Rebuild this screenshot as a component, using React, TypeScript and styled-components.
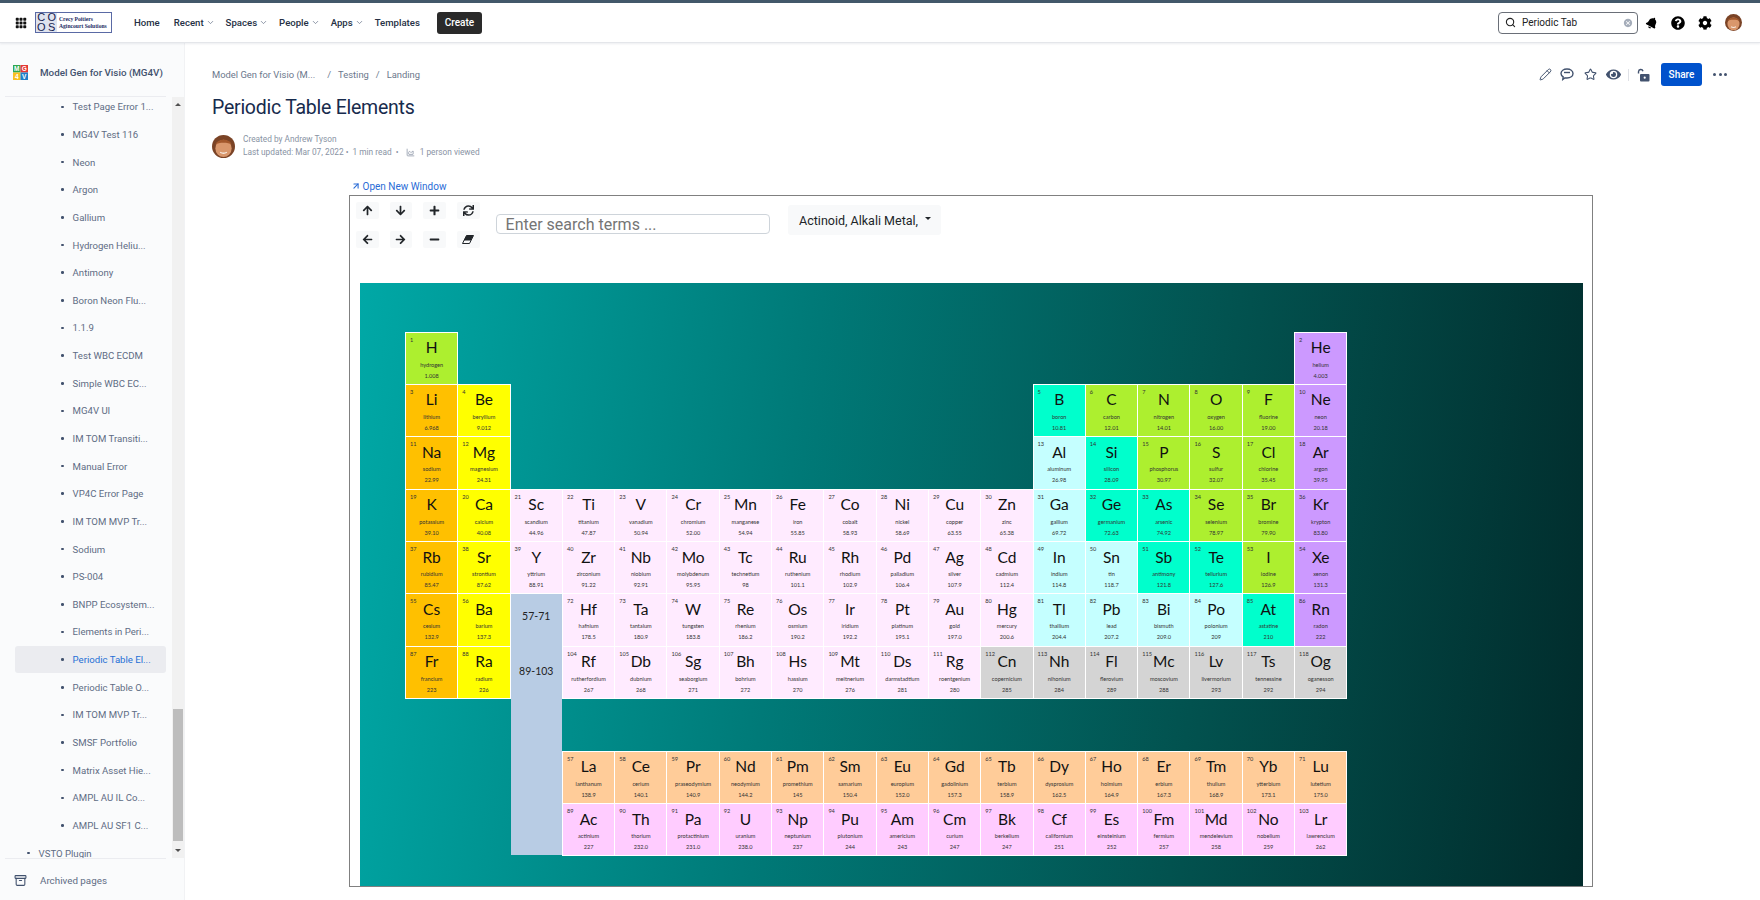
import React from 'react';
import styled, { createGlobalStyle } from 'styled-components';
import { Archive, ArrowUpRight, ChartArea, ChevronDown, Pencil, Search, Star } from 'lucide-react';
import { BsGrid3X3GapFill } from 'react-icons/bs';
import { FaArrowDown, FaArrowLeft, FaArrowRight, FaArrowUp, FaBell, FaCog, FaEye, FaMinus, FaPlus, FaQuestionCircle, FaSync } from 'react-icons/fa';
import { MdCancel } from 'react-icons/md';

const UI_FONT = `Roboto, "Open Sans", sans-serif`;
const TABLE_FONT = `Lato, "Open Sans", sans-serif`;

const GlobalStyle = createGlobalStyle`
  html, body { margin: 0; padding: 0; background: #fff; }
  body { font-family: ${UI_FONT}; color: #172b4d; }
  * { box-sizing: border-box; }
`;

//Page shell
const Page = styled.div`
  width: 1760px;
  height: 900px;
  display: flex;
  flex-direction: column;
  overflow: hidden;
  border-top: 3px solid #42586a;
`;

const TopBar = styled.header`
  height: 40px;
  flex: none;
  display: flex;
  align-items: center;
  padding: 0 18px 0 15px;
  background: #fff;
  border-bottom: 1px solid #e4e6ea;
  box-shadow: 0 1px 2px rgba(9, 30, 66, 0.08);
  z-index: 1;
`;

const AppsIcon = styled(BsGrid3X3GapFill)`
  width: 12px;
  height: 12px;
  color: #111;
  flex: none;
`;

const LogoBox = styled.div`
  margin-left: 8px;
  width: 77px;
  height: 21px;
  display: flex;
  align-items: center;
  border: 1px solid #5a6aa5;
  background: #fff;
  flex: none;
`;

const LogoMark = styled.div`
  width: 21px;
  height: 19px;
  display: grid;
  grid-template-columns: 1fr 1fr;
  grid-template-rows: 1fr 1fr;
  background: #dfe3ee;
  font: 400 11px/9.5px "Liberation Sans", sans-serif;
  color: #16224f;
  text-align: center;
`;

const LogoText = styled.div`
  margin-left: 2px;
  font: 700 5.6px/7px "Liberation Serif", serif;
  color: #1b2a63;
  white-space: nowrap;
`;

const Nav = styled.nav`
  margin-left: 22px;
  display: flex;
  align-items: center;
  gap: 11px;
`;

const NavItem = styled.span<{ $after?: number }>`
  display: inline-flex;
  align-items: center;
  gap: 2px;
  margin-right: ${(p) => p.$after ?? 0}px;
  font-size: 9.6px;
  font-weight: 500;
  color: #253044;
  white-space: nowrap;
`;

const CreateButton = styled.button`
  margin-left: 6px;
  width: 45px;
  height: 22px;
  border: 0;
  border-radius: 3px;
  background: #2a2a2a;
  color: #fff;
  font: 500 10px ${UI_FONT};
  padding: 0;
`;

const TopRight = styled.div`
  margin-left: auto;
  display: flex;
  align-items: center;
`;

const SearchBox = styled.div`
  width: 140px;
  height: 22px;
  display: flex;
  align-items: center;
  padding: 0 4px 0 6px;
  border: 1.5px solid #6a6f78;
  border-radius: 4px;
  color: #222;
  font-size: 10px;
  gap: 6px;
`;

const SearchValue = styled.span`
  flex: 1;
`;

const TopIcons = styled.div`
  margin-left: 8px;
  display: flex;
  align-items: center;
  gap: 13px;
  color: #000;
`;

const TiltedBell = styled(FaBell)`
  transform: rotate(28deg);
`;

const AvatarSvg = styled.svg<{ $size: number }>`
  width: ${(p) => p.$size}px;
  height: ${(p) => p.$size}px;
  flex: none;
  display: block;
`;

const Body = styled.div`
  flex: 1;
  min-height: 0;
  display: flex;
`;

//Sidebar
const Sidebar = styled.aside`
  width: 185px;
  flex: none;
  display: flex;
  flex-direction: column;
  background: #fafbfc;
  border-right: 1px solid #f1f2f4;
`;

const SpaceHeader = styled.div`
  height: 54px;
  flex: none;
  display: flex;
  align-items: center;
  gap: 12px;
  margin: 0 18px 0 5px;
  padding: 5px 0 0 8px;
  border-bottom: 1px solid #ebecf0;
`;

const SpaceLogoSvg = styled.svg`
  width: 15px;
  height: 15px;
  flex: none;
`;

const SpaceTitle = styled.span`
  font-size: 9.8px;
  font-weight: 500;
  color: #42526e;
  white-space: nowrap;
`;

const TreeArea = styled.div`
  flex: 1;
  min-height: 0;
  display: flex;
`;

const TreeClip = styled.div`
  flex: 1;
  min-width: 0;
  overflow: hidden;
`;

const TreeList = styled.ul`
  list-style: none;
  margin: -4px 0 0;
  padding: 0 6px 0 15px;
`;

const TreeItem = styled.li<{ $active?: boolean; $top?: boolean }>`
  height: 27.65px;
  display: flex;
  align-items: center;
  gap: 9px;
  padding-left: ${(p) => (p.$top ? '10px' : '46px')};
  margin-left: ${(p) => (p.$top ? '2px' : '0')};
  border-radius: 3px;
  font-size: 9.6px;
  white-space: nowrap;
  color: ${(p) => (p.$active ? '#1f6fd6' : '#5e6c84')};
  background: ${(p) => (p.$active ? '#ebecf0' : 'transparent')};
`;

const Bullet = styled.span`
  width: 2.6px;
  height: 2.6px;
  border-radius: 50%;
  background: #42526e;
  flex: none;
`;

const ScrollTrack = styled.div`
  width: 12px;
  flex: none;
  display: flex;
  flex-direction: column;
  align-items: center;
  background: #f1f1f1;
`;

const ScrollArrow = styled.span<{ $down?: boolean }>`
  width: 0;
  height: 0;
  flex: none;
  margin: ${(p) => (p.$down ? '8px 0 6px' : '6px 0')};
  border-left: 3px solid transparent;
  border-right: 3px solid transparent;
  ${(p) => (p.$down ? 'border-top: 3px solid #505050;' : 'border-bottom: 3px solid #505050;')}
`;

const ScrollSpace = styled.div`
  flex: 1;
`;

const ScrollThumb = styled.div`
  width: 10px;
  height: 132px;
  flex: none;
  background: #bdbdbd;
`;

const SidebarFoot = styled.div`
  height: 42px;
  flex: none;
  display: flex;
  align-items: center;
  gap: 13px;
  margin: 0 18px 0 5px;
  padding: 2px 0 0 9px;
  font-size: 9.8px;
  color: #5e6c84;
  border-top: 1px solid #ebecf0;
`;

//Main column
const Main = styled.main`
  flex: 1;
  min-width: 0;
  padding: 20px 33px 0 27px;
`;

const CrumbRow = styled.div`
  height: 23px;
  display: flex;
  align-items: center;
  justify-content: space-between;
`;

const Crumbs = styled.div`
  display: flex;
  align-items: center;
  gap: 7px;
  font-size: 9.4px;
  color: #6b778c;
`;

const CrumbFirst = styled.span`
  margin-right: 5px;
`;

const Actions = styled.div`
  display: flex;
  align-items: center;
  color: #42526e;
`;

const ActionSlot = styled.span<{ $w: number }>`
  width: ${(p) => p.$w}px;
  display: inline-flex;
  justify-content: flex-start;
  align-items: center;
`;

const Divider = styled.span`
  width: 1px;
  height: 12px;
  background: #dfe1e6;
  margin-right: 8px;
`;

const ShareButton = styled.button`
  width: 41px;
  height: 23px;
  border: 0;
  border-radius: 3px;
  background: #0052cc;
  color: #fff;
  font: 500 10px ${UI_FONT};
  padding: 0;
  margin: 0 11px 0 3px;
`;

const MoreDots = styled.span`
  display: inline-flex;
  gap: 2.5px;
`;

const MoreDot = styled.span`
  width: 3px;
  height: 3px;
  border-radius: 50%;
  background: #42526e;
`;

const Title = styled.h1`
  margin: 7px 0 0;
  font-size: 19.5px;
  line-height: 30px;
  letter-spacing: -0.25px;
  font-weight: 400;
  color: #172b4d;
`;

const Byline = styled.div`
  margin-top: 10px;
  display: flex;
  align-items: center;
  gap: 8px;
`;

const BylineText = styled.div`
  font-size: 8.3px;
  line-height: 13px;
  color: #8993a4;
`;

const BylineRow = styled.div`
  display: flex;
  align-items: center;
  gap: 3px;
  white-space: pre;
`;

const Embedded = styled.div`
  margin: 20px 0 0 136.5px;
  width: 1244.5px;
`;

const OpenLink = styled.a`
  height: 14px;
  display: flex;
  align-items: center;
  gap: 2px;
  padding-left: 2px;
  font-size: 10px;
  color: #2a6cd6;
`;

const Frame = styled.div`
  margin-top: 2px;
  height: 692px;
  border: 1px solid #808080;
  padding: 6px 9px 0 6.5px;
`;

const Toolbar = styled.div`
  height: 46px;
  display: flex;
  align-items: flex-start;
`;

const IconGrid = styled.div`
  display: grid;
  grid-template-columns: repeat(4, 22.5px);
  grid-template-rows: repeat(2, 17px);
  column-gap: 11.2px;
  row-gap: 12px;
  flex: none;
`;

const ToolButton = styled.button`
  border: 0;
  padding: 0;
  border-radius: 2px;
  background: #f8f9fa;
  color: #212529;
  display: flex;
  align-items: center;
  justify-content: center;
  font-size: 11px;
`;

const SearchInput = styled.input`
  margin: 12px 0 0 16px;
  width: 274px;
  height: 20px;
  padding: 0 9px;
  border: 1px solid #ced4da;
  border-radius: 4px;
  font: 400 16px ${UI_FONT};
  background: #fff;
  &::placeholder { color: #757575; opacity: 1; }
`;

const FilterButton = styled.button`
  margin: 3px 0 0 18px;
  width: 153px;
  height: 30px;
  border: 0;
  border-radius: 3px;
  background: #f8f9fa;
  color: #212529;
  display: flex;
  align-items: center;
  justify-content: center;
  gap: 7px;
  font: 400 12.5px ${UI_FONT};
  padding: 0 0 0 2px;
  white-space: nowrap;
`;

const Caret = styled.span`
  width: 0;
  height: 0;
  margin-bottom: 3px;
  border-left: 3.5px solid transparent;
  border-right: 3.5px solid transparent;
  border-top: 3.5px solid #212529;
`;

//Periodic table
const Board = styled.div`
  margin: 35px 0 0 3.5px;
  height: 603px;
  padding: 49px 0 0 46px;
  background: linear-gradient(97deg, #00a8a6 0%, #007a78 35%, #02524f 68%, #012b2b 100%);
`;

const TableGrid = styled.div`
  display: grid;
  grid-template-columns: repeat(18, 52.3px);
  grid-template-rows: repeat(10, 52.4px);
`;

const CATEGORY: Record<string, string> = {
  nonmetal: '#adef2f',
  alkali: '#ffc000',
  alkaline: '#ffff00',
  transition: '#ffebff',
  post: '#c5ffff',
  metalloid: '#00ffcc',
  noble: '#cc99ff',
  lanthanide: '#ffcc99',
  actinide: '#ffccff',
  unknown: '#d4d4d4',
};

const Cell = styled.div<{ $col: number; $row: number; $cat: string }>`
  grid-column: ${(p) => p.$col};
  grid-row: ${(p) => p.$row};
  margin: 0.5px;
  position: relative;
  display: flex;
  flex-direction: column;
  align-items: center;
  padding-top: 4.5px;
  background: ${(p) => CATEGORY[p.$cat]};
  box-shadow: 0 0 0 1px #fff;
  font-family: ${TABLE_FONT};
  color: #111;
`;

const CellNumber = styled.span`
  position: absolute;
  left: 4px;
  top: 3px;
  font-size: 5.6px;
  line-height: 7px;
  color: #333;
`;

const Symbol = styled.span`
  font-size: 15.5px;
  line-height: 21px;
`;

const ElementName = styled.span`
  margin-top: 2.5px;
  font-size: 5.6px;
  line-height: 8px;
  color: #333;
  white-space: nowrap;
`;

const Weight = styled.span`
  margin-top: 3px;
  font-size: 5.6px;
  line-height: 8px;
  color: #333;
`;

const SeriesColumn = styled.div`
  grid-column: 3;
  grid-row: 6 / 11;
  margin: 0.5px;
  display: flex;
  flex-direction: column;
  align-items: center;
  gap: 41px;
  padding-top: 15px;
  background: #b8cce4;
  font: 400 10.5px/14px ${TABLE_FONT};
  color: #222;
`;

type Entry = [string, string, string, string];

const alk = 'alkali', ae = 'alkaline', tm = 'transition', pt = 'post', md = 'metalloid', nm = 'nonmetal', ng = 'noble', un = 'unknown';

//[period row, start column, start number, entries]
const BLOCKS: [number, number, number, Entry[]][] = [
  [1, 1, 1, [['H', 'hydrogen', '1.008', nm]]],
  [1, 18, 2, [['He', 'helium', '4.003', ng]]],
  [2, 1, 3, [['Li', 'lithium', '6.968', alk], ['Be', 'beryllium', '9.012', ae]]],
  [2, 13, 5, [['B', 'boron', '10.81', md], ['C', 'carbon', '12.01', nm], ['N', 'nitrogen', '14.01', nm], ['O', 'oxygen', '16.00', nm], ['F', 'fluorine', '19.00', nm], ['Ne', 'neon', '20.18', ng]]],
  [3, 1, 11, [['Na', 'sodium', '22.99', alk], ['Mg', 'magnesium', '24.31', ae]]],
  [3, 13, 13, [['Al', 'aluminum', '26.98', pt], ['Si', 'silicon', '28.09', md], ['P', 'phosphorus', '30.97', nm], ['S', 'sulfur', '32.07', nm], ['Cl', 'chlorine', '35.45', nm], ['Ar', 'argon', '39.95', ng]]],
  [4, 1, 19, [['K', 'potassium', '39.10', alk], ['Ca', 'calcium', '40.08', ae], ['Sc', 'scandium', '44.96', tm], ['Ti', 'titanium', '47.87', tm], ['V', 'vanadium', '50.94', tm], ['Cr', 'chromium', '52.00', tm], ['Mn', 'manganese', '54.94', tm], ['Fe', 'iron', '55.85', tm], ['Co', 'cobalt', '58.93', tm], ['Ni', 'nickel', '58.69', tm], ['Cu', 'copper', '63.55', tm], ['Zn', 'zinc', '65.38', tm], ['Ga', 'gallium', '69.72', pt], ['Ge', 'germanium', '72.63', md], ['As', 'arsenic', '74.92', md], ['Se', 'selenium', '78.97', nm], ['Br', 'bromine', '79.90', nm], ['Kr', 'krypton', '83.80', ng]]],
  [5, 1, 37, [['Rb', 'rubidium', '85.47', alk], ['Sr', 'strontium', '87.62', ae], ['Y', 'yttrium', '88.91', tm], ['Zr', 'zirconium', '91.22', tm], ['Nb', 'niobium', '92.91', tm], ['Mo', 'molybdenum', '95.95', tm], ['Tc', 'technetium', '98', tm], ['Ru', 'ruthenium', '101.1', tm], ['Rh', 'rhodium', '102.9', tm], ['Pd', 'palladium', '106.4', tm], ['Ag', 'silver', '107.9', tm], ['Cd', 'cadmium', '112.4', tm], ['In', 'indium', '114.8', pt], ['Sn', 'tin', '118.7', pt], ['Sb', 'antimony', '121.8', md], ['Te', 'tellurium', '127.6', md], ['I', 'iodine', '126.9', nm], ['Xe', 'xenon', '131.3', ng]]],
  [6, 1, 55, [['Cs', 'cesium', '132.9', alk], ['Ba', 'barium', '137.3', ae]]],
  [6, 4, 72, [['Hf', 'hafnium', '178.5', tm], ['Ta', 'tantalum', '180.9', tm], ['W', 'tungsten', '183.8', tm], ['Re', 'rhenium', '186.2', tm], ['Os', 'osmium', '190.2', tm], ['Ir', 'iridium', '192.2', tm], ['Pt', 'platinum', '195.1', tm], ['Au', 'gold', '197.0', tm], ['Hg', 'mercury', '200.6', tm], ['Tl', 'thallium', '204.4', pt], ['Pb', 'lead', '207.2', pt], ['Bi', 'bismuth', '209.0', pt], ['Po', 'polonium', '209', pt], ['At', 'astatine', '210', md], ['Rn', 'radon', '222', ng]]],
  [7, 1, 87, [['Fr', 'francium', '223', alk], ['Ra', 'radium', '226', ae]]],
  [7, 4, 104, [['Rf', 'rutherfordium', '267', tm], ['Db', 'dubnium', '268', tm], ['Sg', 'seaborgium', '271', tm], ['Bh', 'bohrium', '272', tm], ['Hs', 'hassium', '270', tm], ['Mt', 'meitnerium', '276', tm], ['Ds', 'darmstadtium', '281', tm], ['Rg', 'roentgenium', '280', tm], ['Cn', 'copernicium', '285', un], ['Nh', 'nihonium', '284', un], ['Fl', 'flerovium', '289', un], ['Mc', 'moscovium', '288', un], ['Lv', 'livermorium', '293', un], ['Ts', 'tennessine', '292', un], ['Og', 'oganesson', '294', un]]],
  [9, 4, 57, [['La', 'lanthanum', '138.9', 'lanthanide'], ['Ce', 'cerium', '140.1', 'lanthanide'], ['Pr', 'praseodymium', '140.9', 'lanthanide'], ['Nd', 'neodymium', '144.2', 'lanthanide'], ['Pm', 'promethium', '145', 'lanthanide'], ['Sm', 'samarium', '150.4', 'lanthanide'], ['Eu', 'europium', '152.0', 'lanthanide'], ['Gd', 'gadolinium', '157.3', 'lanthanide'], ['Tb', 'terbium', '158.9', 'lanthanide'], ['Dy', 'dysprosium', '162.5', 'lanthanide'], ['Ho', 'holmium', '164.9', 'lanthanide'], ['Er', 'erbium', '167.3', 'lanthanide'], ['Tm', 'thulium', '168.9', 'lanthanide'], ['Yb', 'ytterbium', '173.1', 'lanthanide'], ['Lu', 'lutetium', '175.0', 'lanthanide']]],
  [10, 4, 89, [['Ac', 'actinium', '227', 'actinide'], ['Th', 'thorium', '232.0', 'actinide'], ['Pa', 'protactinium', '231.0', 'actinide'], ['U', 'uranium', '238.0', 'actinide'], ['Np', 'neptunium', '237', 'actinide'], ['Pu', 'plutonium', '244', 'actinide'], ['Am', 'americium', '243', 'actinide'], ['Cm', 'curium', '247', 'actinide'], ['Bk', 'berkelium', '247', 'actinide'], ['Cf', 'californium', '251', 'actinide'], ['Es', 'einsteinium', '252', 'actinide'], ['Fm', 'fermium', '257', 'actinide'], ['Md', 'mendelevium', '258', 'actinide'], ['No', 'nobelium', '259', 'actinide'], ['Lr', 'lawrencium', '262', 'actinide']]],
];

const TREE = [
  'Test Page Error 1...', 'MG4V Test 116', 'Neon', 'Argon', 'Gallium', 'Hydrogen Heliu...', 'Antimony', 'Boron Neon Flu...', '1.1.9',
  'Test WBC ECDM', 'Simple WBC EC...', 'MG4V UI', 'IM TOM Transiti...', 'Manual Error', 'VP4C Error Page', 'IM TOM MVP Tr...', 'Sodium',
  'PS-004', 'BNPP Ecosystem...', 'Elements in Peri...', 'Periodic Table El...', 'Periodic Table O...', 'IM TOM MVP Tr...', 'SMSF Portfolio',
  'Matrix Asset Hie...', 'AMPL AU IL Co...', 'AMPL AU SF1 C...',
];

//Small drawings
const Avatar = ({ size }: { size: number }) => (
  <AvatarSvg $size={size} viewBox="0 0 24 24">
    <circle cx="12" cy="12" r="12" fill="#7a4326" />
    <ellipse cx="12" cy="14" rx="8.5" ry="9" fill="#d9976c" />
    <path d="M3.5 10c2-6.5 15-7 17 0-3.5-2.5-13.5-2.5-17 0z" fill="#a3582c" />
    <path d="M8.5 18c2.2 1.3 4.8 1.3 7 0" stroke="#f6e9df" strokeWidth="1.5" fill="none" />
  </AvatarSvg>
);

const SpaceLogo = () => (
  <SpaceLogoSvg viewBox="0 0 15 15">
    <rect x="0" y="0" width="7.5" height="7.5" fill="#2fa84f" />
    <rect x="7.5" y="0" width="7.5" height="7.5" fill="#e53935" />
    <rect x="0" y="7.5" width="7.5" height="7.5" fill="#f9c01e" />
    <rect x="7.5" y="7.5" width="7.5" height="7.5" fill="#1e7fc9" />
    <text x="3.7" y="6.4" textAnchor="middle" fontSize="6.5" fontWeight="700" fontFamily="Liberation Sans" fill="#fff">M</text>
    <text x="11.2" y="6.4" textAnchor="middle" fontSize="6.5" fontWeight="700" fontFamily="Liberation Sans" fill="#fff">G</text>
    <text x="3.7" y="13.9" textAnchor="middle" fontSize="6.5" fontWeight="700" fontFamily="Liberation Sans" fill="#fff">4</text>
    <text x="11.2" y="13.9" textAnchor="middle" fontSize="6.5" fontWeight="700" fontFamily="Liberation Sans" fill="#fff">V</text>
  </SpaceLogoSvg>
);

const CommentIcon = () => (
  <svg width="14" height="13" viewBox="0 0 14 13" fill="none" stroke="currentColor" strokeWidth="1.4">
    <path d="M7 1c3.3 0 6 1.9 6 4.5S10.3 10 7 10c-.7 0-1.3 0-1.9-.2L2.8 11.5l.4-2.6C1.8 8 1 6.9 1 5.5 1 2.900 3.700 1 7 1z" />
    <path d="M4 4.500h6" />
  </svg>
);

const UnlockIcon = () => (
  <svg width="13" height="14" viewBox="0 0 13 14">
    <path d="M1.5 5.5V3.7a2.3 2.3 0 0 1 4.5-.5" fill="none" stroke="currentColor" strokeWidth="1.4" />
    <rect x="3" y="6" width="9.5" height="7.5" rx="1" fill="currentColor" />
    <circle cx="7.7" cy="9.7" r="1.1" fill="#fff" />
  </svg>
);

const EraserIcon = () => (
  <svg width="12" height="9" viewBox="0 0 12 9">
    <path d="M4.5.5h7L7.5 8.500H.5z" fill="none" stroke="#212529" strokeWidth="1" />
    <path d="M4.5.5h7L8.800 5.500h-7z" fill="#212529" />
  </svg>
);

export default function App() {
  return (
    <>
      <GlobalStyle />
      <Page>
        <TopBar>
          <AppsIcon />
          <LogoBox>
            <LogoMark>
              <span>C</span><span>O</span><span>O</span><span>S</span>
            </LogoMark>
            <LogoText>
              Crecy Poitiers<br />Agincourt Solutions
            </LogoText>
          </LogoBox>
          <Nav>
            <NavItem $after={3}>Home</NavItem>
            <NavItem>Recent <ChevronDown size={9} color="#6b778c" /></NavItem>
            <NavItem>Spaces <ChevronDown size={9} color="#6b778c" /></NavItem>
            <NavItem>People <ChevronDown size={9} color="#6b778c" /></NavItem>
            <NavItem>Apps <ChevronDown size={9} color="#6b778c" /></NavItem>
            <NavItem>Templates</NavItem>
            <CreateButton>Create</CreateButton>
          </Nav>
          <TopRight>
            <SearchBox>
              <Search size={11} strokeWidth={2.4} />
              <SearchValue>Periodic Tab</SearchValue>
              <MdCancel size={10} color="#a5adba" />
            </SearchBox>
            <TopIcons>
              <TiltedBell size={12} />
              <FaQuestionCircle size={14} />
              <FaCog size={14} />
              <Avatar size={17} />
            </TopIcons>
          </TopRight>
        </TopBar>
        <Body>
          <Sidebar>
            <SpaceHeader>
              <SpaceLogo />
              <SpaceTitle>Model Gen for Visio (MG4V)</SpaceTitle>
            </SpaceHeader>
            <TreeArea>
              <TreeClip>
                <TreeList>
                  {TREE.map((label, i) => (
                    <TreeItem key={i} $active={label === 'Periodic Table El...'}>
                      <Bullet />
                      {label}
                    </TreeItem>
                  ))}
                  <TreeItem $top>
                    <Bullet />
                    VSTO Plugin
                  </TreeItem>
                </TreeList>
              </TreeClip>
              <ScrollTrack>
                <ScrollArrow />
                <ScrollSpace />
                <ScrollThumb />
                <ScrollArrow $down />
              </ScrollTrack>
            </TreeArea>
            <SidebarFoot>
              <Archive size={13} strokeWidth={2} color="#42526e" />
              Archived pages
            </SidebarFoot>
          </Sidebar>
          <Main>
            <CrumbRow>
              <Crumbs>
                <CrumbFirst>Model Gen for Visio (M...</CrumbFirst>
                <span>/</span>
                <span>Testing</span>
                <span>/</span>
                <span>Landing</span>
              </Crumbs>
              <Actions>
                <ActionSlot $w={21}><Pencil size={13} strokeWidth={1.8} /></ActionSlot>
                <ActionSlot $w={24}><CommentIcon /></ActionSlot>
                <ActionSlot $w={22}><Star size={13} strokeWidth={2} /></ActionSlot>
                <ActionSlot $w={22}><FaEye size={15} /></ActionSlot>
                <Divider />
                <ActionSlot $w={21}><UnlockIcon /></ActionSlot>
                <ShareButton>Share</ShareButton>
                <MoreDots><MoreDot /><MoreDot /><MoreDot /></MoreDots>
              </Actions>
            </CrumbRow>
            <Title>Periodic Table Elements</Title>
            <Byline>
              <Avatar size={23} />
              <BylineText>
                <BylineRow>Created by Andrew Tyson</BylineRow>
                <BylineRow>
                  Last updated: Mar 07, 2022 •  1 min read  •  <ChartArea size={9} /> 1 person viewed
                </BylineRow>
              </BylineText>
            </Byline>
            <Embedded>
              <OpenLink>
                <ArrowUpRight size={10} strokeWidth={2.6} />
                Open New Window
              </OpenLink>
              <Frame>
                <Toolbar>
                  <IconGrid>
                    <ToolButton><FaArrowUp /></ToolButton>
                    <ToolButton><FaArrowDown /></ToolButton>
                    <ToolButton><FaPlus /></ToolButton>
                    <ToolButton><FaSync /></ToolButton>
                    <ToolButton><FaArrowLeft /></ToolButton>
                    <ToolButton><FaArrowRight /></ToolButton>
                    <ToolButton><FaMinus /></ToolButton>
                    <ToolButton><EraserIcon /></ToolButton>
                  </IconGrid>
                  <SearchInput placeholder="Enter search terms ..." />
                  <FilterButton>
                    Actinoid, Alkali Metal,
                    <Caret />
                  </FilterButton>
                </Toolbar>
                <Board>
                  <TableGrid>
                    {BLOCKS.map(([row, col, num, entries]) =>
                      entries.map(([sym, name, weight, cat], i) => (
                        <Cell key={sym} $col={col + i} $row={row} $cat={cat}>
                          <CellNumber>{num + i}</CellNumber>
                          <Symbol>{sym}</Symbol>
                          <ElementName>{name}</ElementName>
                          <Weight>{weight}</Weight>
                        </Cell>
                      ))
                    )}
                    <SeriesColumn>
                      <span>57-71</span>
                      <span>89-103</span>
                    </SeriesColumn>
                  </TableGrid>
                </Board>
              </Frame>
            </Embedded>
          </Main>
        </Body>
      </Page>
    </>
  );
}
